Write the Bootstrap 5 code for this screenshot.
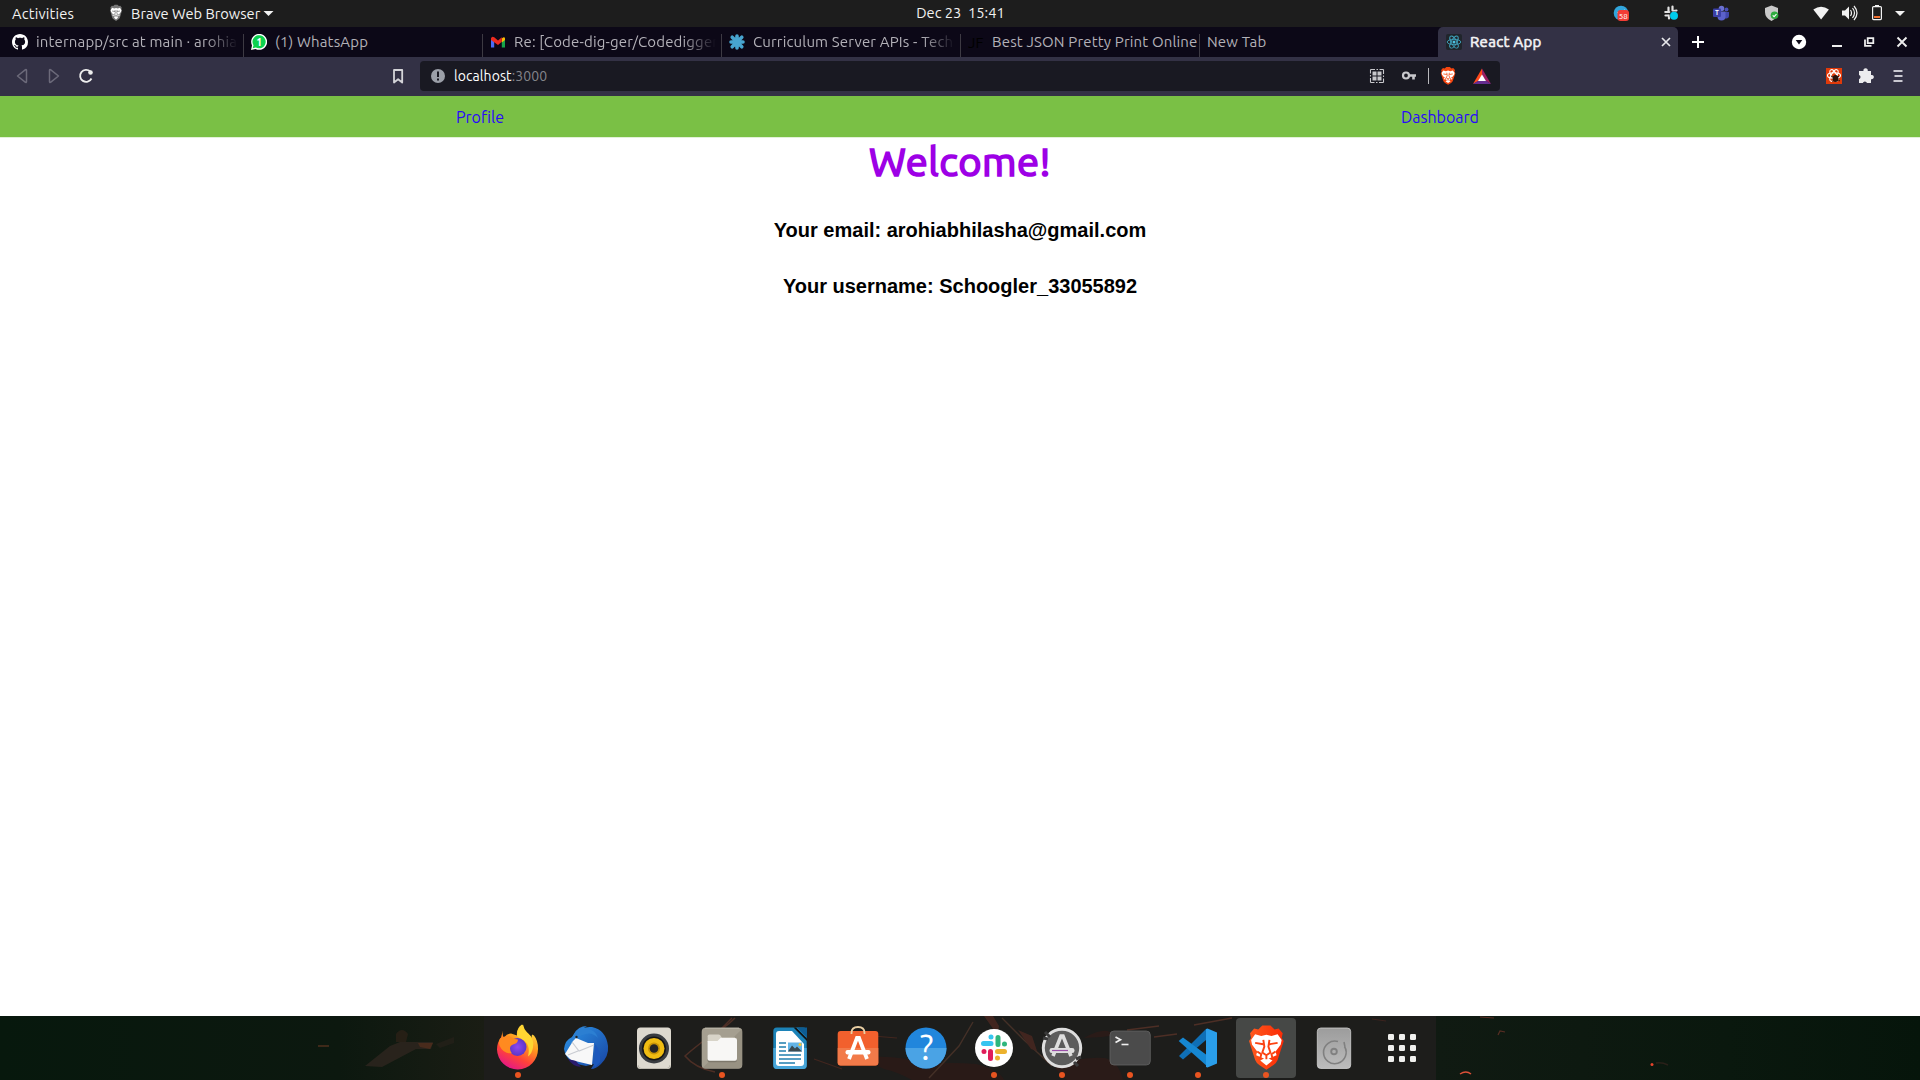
<!DOCTYPE html>
<html lang="en">
<head>
<meta charset="utf-8">
<meta name="viewport" content="width=device-width, initial-scale=1">
<title>React App</title>
<link href="https://cdn.jsdelivr.net/npm/bootstrap@5.3.0/dist/css/bootstrap.min.css" rel="stylesheet">
<style>
body{font-family:"Ubuntu","Noto Sans",sans-serif;width:1920px;height:1080px;overflow:hidden;font-size:15px;line-height:20px;background:#fff}
svg{display:block;flex:none}
svg text{font-family:"Ubuntu","Noto Sans",sans-serif}
.sysbar{height:27px;background:#1d1d1d;color:#f2f2f2;font-size:14.67px;padding:0 10px 1px 12px}
.sys-activities{letter-spacing:.2px;padding-top:2px}
.app-icon{margin-left:32px}
.app-name{margin-left:5px;margin-right:-1px;padding-top:2px}
.clock{left:1px;right:0;top:3px;white-space:pre}
.tabstrip{height:30px;background:#0c0817;color:#b3b1b8;padding-left:4px}
.tab-item{height:30px;width:239px;padding:0 2px 0 8px;gap:8px}
.tab-item.sep{background:linear-gradient(#3d3a43,#3d3a43) 0 7px/1px 23px no-repeat}
.tab-label{overflow:hidden;white-space:nowrap;flex:1;letter-spacing:.16px}
.faded{-webkit-mask-image:linear-gradient(90deg,#000 calc(100% - 36px),transparent calc(100% - 3px));mask-image:linear-gradient(90deg,#000 calc(100% - 36px),transparent calc(100% - 3px))}
.tab-item.current{background:#333145;color:#f3f3f5;width:240px;padding-right:3px;border-radius:5px 5px 0 0}
.tab-item.current .tab-label{-webkit-text-stroke:.6px #f3f3f5;letter-spacing:.3px}
.toolbar{height:39px;background:#333145;padding:0 12px 1px;gap:12px}
.bookmark{margin-left:280px}
.address{width:1080px;height:30px;background:#191922;border-radius:4px;color:#fff;font-size:14px;padding:0 8px}
.address-text{margin-left:6px;letter-spacing:.08px}
.port{color:#84848b}
.bar-sep{width:1px;height:16px;background:#b9b9bd;margin:0 9px}
.appnav{height:42px;background:#7ac045;border-bottom:1px solid #e2f1d7;font-size:16px;line-height:24px;padding-top:9px}
.appnav a{color:#2808fa;text-decoration:none}
.page{height:878px}
.page h1{font-size:40px;font-weight:400;-webkit-text-stroke:1.7px #9d00e6;letter-spacing:.45px;color:#9d00e6;line-height:48px;margin-bottom:33px}
.page h2{font:bold 20px/23px "Liberation Sans",Arial,sans-serif;color:#000;margin-bottom:33px}
.dockbar{height:64px;background:#0a180e}
.wallpaper{left:0;top:0}
.dock-item{width:60px;height:60px;margin:2px 4px;border-radius:4px}
.dock-item.focused{background:#464846}
.running::after{content:"";position:absolute;left:27px;top:54px;width:6px;height:6px;border-radius:50%;background:#e95420}
</style>
</head>
<body class="d-flex flex-column">

<svg width="0" height="0" class="position-absolute">
  <defs>
    <g id="lion">
      <path d="M15 1 L23 1 L27 5 L31 4 L35 9 L34 14 L36 17 L30 37 Q29 40 26 42 L19 47 L12 42 Q9 40 8 37 L2 17 L4 14 L3 9 L7 4 L11 5 Z" transform="translate(0,-2)"/>
    </g>
    <g id="lionface">
      <path d="M8 8 L14 10 L19 8.500 L24 10 L30 8 L34 14 L33 19 L28 26 L29 30 L22 33 L19 35 L16 33 L9 30 L10 26 L5 19 L4 14 Z"/>
      <path d="M13 35.500 L19 32 L25 35.500 L19 40.500 Z"/>
    </g>
    <g id="lionlines" fill="none" stroke-width="1.900" stroke-linejoin="round">
      <path d="M8 17 L16 18.500 M30 17 L22 18.500 M16 14 L17 21 L15 27 L19 30 L23 27 L21 21 L22 14 M10 26 L14 29 L13 33 M28 26 L24 29 L25 33 M19 30 V34"/>
    </g>
  </defs>
</svg>

<header class="sysbar d-flex align-items-center position-relative">
  <span class="sys-activities">Activities</span>
  <svg class="app-icon" width="20" height="20" viewBox="107 3 20 20"><g transform="translate(110.300,5) scale(.355,.355)"><use href="#lion" fill="#777"/><use href="#lionface" fill="#fff"/><use href="#lionlines" stroke="#666"/></g></svg>
  <span class="app-name">Brave Web Browser</span>
  <svg width="20" height="20" viewBox="260 3 20 20"><path d="M264.500 11h10l-5 5z" fill="#f2f2f2"/></svg>
  <div class="clock position-absolute text-center">Dec 23  15:41</div>
  <div class="d-flex ms-auto">
    <svg width="20" height="20" viewBox="1612 3 20 20"><circle cx="1621" cy="13" r="7.300" fill="#31a5dc"/><path d="M1617 12.500l8-3-2 7z" fill="#fff"/><rect x="1617.500" y="10" width="11.500" height="11" rx="3" fill="#f23c34"/><text x="1623.300" y="18.800" font-size="8" text-anchor="middle" fill="#fff">58</text></svg>
    <svg style="margin-left:30px" width="20" height="20" viewBox="1662 3 20 20"><g stroke="#e4e4e4" stroke-width="2.200" stroke-linecap="round"><path d="M1668.500 7.500v3.500M1672.500 6.500v4M1665.300 12h4M1673.500 11l3-.5M1665.500 15.500h3M1669 15.500v3"/></g><circle cx="1674" cy="15.800" r="4.400" fill="#1d1d1d"/><circle cx="1674" cy="15.800" r="4" fill="#00cdec"/></svg>
    <svg style="margin-left:29px" width="20" height="20" viewBox="1711 3 20 20"><circle cx="1721.500" cy="8.500" r="2.800" fill="#6a70d0"/><circle cx="1726.500" cy="9.500" r="1.900" fill="#4a50b8"/><path d="M1724.500 12h4.500v4a2.800 2.800 0 0 1-4.500 2z" fill="#4248ad"/><path d="M1717.500 11.500h8v5a4 4 0 0 1-8 0z" fill="#5b61cb"/><rect x="1713" y="8.500" width="8" height="8.500" rx="1" fill="#3b3fa6"/><text x="1717" y="15.200" font-size="6.500" font-weight="700" text-anchor="middle" fill="#fff">T</text></svg>
    <svg style="margin-left:30px" width="20" height="20" viewBox="1761 3 20 20"><path d="M1771.500 5.500l6.500 2.500v4q0 6-6.500 9-6.500-3-6.500-9v-4z" fill="#c9c9c9"/><circle cx="1774.500" cy="15.300" r="3.800" fill="#2fac3f"/><path d="M1772.700 15.300l1.400 1.400 2.400-2.600" fill="none" stroke="#fff" stroke-width="1.100"/></svg>
    <svg style="margin-left:30px" width="20" height="20" viewBox="1811 3 20 20"><path d="M1813.300 9.500q7.800-5.500 15.600 0l-7.800 10z" fill="#f2f2f2"/></svg>
    <svg style="margin-left:9px" width="20" height="20" viewBox="1840 3 20 20"><path d="M1842 10.500h3l4-4v13l-4-4h-3z" fill="#f2f2f2"/><path d="M1850.500 10q2 3 0 6M1852.500 8q4 5 0 10M1854 6q6 7 0 14" fill="none" stroke="#f2f2f2" stroke-width="1.200"/></svg>
    <svg style="margin-left:7px" width="20" height="20" viewBox="1867 3 20 20"><rect x="1872.600" y="6.600" width="8.800" height="13" rx="1" fill="none" stroke="#f2f2f2" stroke-width="1.200"/><path d="M1875 5h4v1.500h-4z" fill="#f2f2f2"/><path d="M1874 16h6v2h-6z" fill="#f0702f"/></svg>
    <svg style="margin-left:3px" width="20" height="20" viewBox="1890 3 20 20"><path d="M1895 11h10l-5 5z" fill="#f2f2f2"/></svg>
  </div>
</header>

<nav class="tabstrip d-flex" aria-label="Tabs">
  <div class="tab-item d-flex align-items-center">
    <svg width="16" height="16" viewBox="0 0 16 16"><path fill="#fff" d="M8 0C3.580 0 0 3.580 0 8c0 3.540 2.290 6.530 5.470 7.590.4.070.55-.17.55-.38 0-.19-.01-.82-.01-1.490-2.010.37-2.530-.49-2.690-.94-.09-.23-.48-.94-.82-1.130-.28-.15-.68-.52-.01-.53.63-.01 1.080.58 1.230.82.72 1.210 1.870.87 2.330.66.070-.52.28-.87.51-1.070-1.780-.2-3.640-.89-3.640-3.950 0-.87.31-1.590.82-2.150-.08-.2-.36-1.020.08-2.120 0 0 .67-.21 2.200.82.64-.18 1.320-.27 2-.27s1.360.09 2 .27c1.530-1.040 2.200-.82 2.200-.82.44 1.100.16 1.920.08 2.120.51.56.82 1.270.82 2.150 0 3.070-1.870 3.750-3.650 3.950.29.25.54.73.54 1.480 0 1.070-.01 1.930-.01 2.200 0 .21.15.46.55.38A8.010 8.010 0 0 0 16 8c0-4.420-3.580-8-8-8z"/></svg>
    <span class="tab-label faded">internapp/src at main · arohia</span>
  </div>
  <div class="tab-item sep d-flex align-items-center">
    <svg width="16" height="16" viewBox="0 0 16 16"><path d="M0 16l1-4.500A8 8 0 1 1 4.500 15z" fill="#fff"/><path d="M1.700 14.300l.8-3A6.600 6.600 0 1 1 4.800 13.500z" fill="#0cd14e"/><text x="8.200" y="12" font-size="10.500" font-weight="700" text-anchor="middle" fill="#fff">1</text></svg>
    <span class="tab-label">(1) WhatsApp</span>
  </div>
  <div class="tab-item sep d-flex align-items-center">
    <svg width="16" height="16" viewBox="0 0 16 16"><path d="M1 4v9.500h3.200V6z" fill="#4a6cf7"/><path d="M15 4v9.500h-3.200V6z" fill="#16a54a"/><path d="M15 6l-3.200 2.500V4.500q2.800-2.500 3.200 0z" fill="#fbbc04"/><path d="M1 4.500q.6-2.600 3.200-1.200L8 6.500l3.800-3.200v4.500L8 11 1 6z" fill="#ee2b1f"/></svg>
    <span class="tab-label faded">Re: [Code-dig-ger/Codedigger</span>
  </div>
  <div class="tab-item sep d-flex align-items-center">
    <svg width="16" height="16" viewBox="0 0 16 16"><g stroke="#47a5d0" stroke-width="3.600" stroke-linecap="round"><path d="M8 2v12M2 8h12M3.200 3.200l9.600 9.600M12.800 3.200l-9.600 9.600"/></g></svg>
    <span class="tab-label faded">Curriculum Server APIs - Techn</span>
  </div>
  <div class="tab-item sep d-flex align-items-center">
    <svg width="16" height="16" viewBox="0 0 16 16"><text x="0" y="14" font-size="15" fill="#000">JF</text></svg>
    <span class="tab-label">Best JSON Pretty Print Online</span>
  </div>
  <div class="tab-item sep d-flex align-items-center">
    <span class="tab-label">New Tab</span>
  </div>
  <div class="tab-item current d-flex align-items-center">
    <svg width="16" height="16" viewBox="0 0 16 16"><rect width="16" height="16" rx="2" fill="#20252b"/><g fill="none" stroke="#3fa3bd" stroke-width=".9"><ellipse cx="8" cy="8" rx="6.800" ry="2.700"/><ellipse cx="8" cy="8" rx="6.800" ry="2.700" transform="rotate(60 8 8)"/><ellipse cx="8" cy="8" rx="6.800" ry="2.700" transform="rotate(120 8 8)"/></g><circle cx="8" cy="8" r="1.500" fill="#4cc3e0"/></svg>
    <span class="tab-label">React App</span>
    <svg width="18" height="18" viewBox="0 0 18 18"><path d="M5 5l8 8M13 5l-8 8" stroke="#e8e8ec" stroke-width="1.700"/></svg>
  </div>
  <div class="d-flex align-items-center flex-fill" style="padding:0 8px 0 10px">
    <svg width="20" height="20" viewBox="0 0 20 20"><path d="M4 10h12M10 4v12" stroke="#fff" stroke-width="2"/></svg>
    <svg class="ms-auto" width="20" height="20" viewBox="0 0 20 20"><circle cx="10" cy="10" r="7.200" fill="#fff"/><path d="M6.700 8h6.600L10 12.600z" fill="#0c0817"/></svg>
    <svg style="margin-left:18px" width="20" height="20" viewBox="0 0 20 20"><path d="M5 14h10" stroke="#eee" stroke-width="2"/></svg>
    <svg style="margin-left:12px" width="20" height="20" viewBox="0 0 20 20"><path d="M8.700 6.200h5.600v4.900H8.700zM6 7.500v6.300h6.500" fill="none" stroke="#eee" stroke-width="1.800"/></svg>
    <svg style="margin-left:13px" width="20" height="20" viewBox="0 0 20 20"><path d="M5.500 5.500l9 9M14.500 5.500l-9 9" stroke="#eee" stroke-width="1.900"/></svg>
  </div>
</nav>

<div class="toolbar d-flex align-items-center">
  <svg width="20" height="20" viewBox="12 66 20 20"><path d="M17.500 76l8-6.300q1 -.4 1 .8v11q0 1.200-1 .8z" fill="none" stroke="#6c6a7a" stroke-width="1.500" stroke-linejoin="round"/></svg>
  <svg width="20" height="20" viewBox="44 66 20 20"><path d="M58.500 76l-8-6.300q-1-.4-1 .8v11q0 1.200 1 .8z" fill="none" stroke="#6c6a7a" stroke-width="1.500" stroke-linejoin="round"/></svg>
  <svg width="20" height="20" viewBox="76 66 20 20"><path d="M91.500 78.500a6 6 0 1 1-1.200-7" fill="none" stroke="#eee" stroke-width="1.800"/><circle cx="90.500" cy="72.500" r="2.300" fill="#eee"/></svg>
  <svg class="bookmark" width="20" height="20" viewBox="388 66 20 20"><path d="M394 70h8.200v12.500l-4.100-3.200-4.100 3.200z" fill="none" stroke="#d4d4d8" stroke-width="1.800" stroke-linejoin="round"/></svg>
  <div class="address d-flex align-items-center">
    <svg width="20" height="20" viewBox="428 66 20 20"><circle cx="438" cy="76" r="7" fill="#9b9fa8"/><path d="M438 71.500v5.500M438 78.500v2" stroke="#191922" stroke-width="2"/></svg>
    <span class="address-text">localhost<span class="port">:3000</span></span>
    <svg class="ms-auto" width="20" height="20" viewBox="1367 66 20 20"><rect x="1370.500" y="69.500" width="13" height="13" fill="none" stroke="#c8c8cc" stroke-width="1.100" stroke-dasharray="4.500 1.500 1.500 1.500 4 0"/><path d="M1372.500 71.500h4v4h-4zM1377.500 71.500h4v4h-4zM1372.500 76.500h4v4h-4zM1377.500 76.500h4v4h-4z" fill="#c8c8cc"/></svg>
    <svg style="margin-left:12px" width="20" height="20" viewBox="1399 66 20 20"><circle cx="1406" cy="75.500" r="3" fill="none" stroke="#c8c8cc" stroke-width="2.200"/><path d="M1409 75.500h7M1413.500 76v3.500" fill="none" stroke="#c8c8cc" stroke-width="2.600"/></svg>
    <div class="bar-sep"></div>
    <svg width="20" height="20" viewBox="1438 66 20 20"><g transform="translate(1439.900,67.300) scale(.43,.39)"><use href="#lion" fill="#f4450f"/><use href="#lionface" fill="#fff"/><use href="#lionlines" stroke="#f4450f"/></g></svg>
    <svg style="margin-left:14px" width="20" height="20" viewBox="1472 66 20 20"><path d="M1482 68.500v7l-3.500 5.500-5.500 3z" fill="#ff4a1c"/><path d="M1482 68.500v7l4 5.500 5 3z" fill="#9e1f63"/><path d="M1473 84h18l-5.500-3.500h-7z" fill="#662d91"/><path d="M1482 74.500l4 6.500h-8z" fill="#fff"/></svg>
  </div>
  <svg class="ms-auto" width="20" height="20" viewBox="1824 66 20 20"><rect x="1826" y="68" width="16" height="16" fill="#e03a0a"/><g fill="none" stroke="#fff" stroke-width="1.100"><ellipse cx="1834" cy="75.500" rx="6.500" ry="2.700"/><ellipse cx="1834" cy="75.500" rx="6.500" ry="2.700" transform="rotate(60 1834 75.500)"/><ellipse cx="1834" cy="75.500" rx="6.500" ry="2.700" transform="rotate(120 1834 75.500)"/></g><ellipse cx="1835.500" cy="78.500" rx="3" ry="3.600" fill="#2b120a"/><path d="M1831 76l9 5M1832 81.500l7-5.500" stroke="#2b120a"/></svg>
  <svg width="20" height="20" viewBox="1856 66 20 20"><path d="M1860 71h3.500a2.200 2.200 0 1 1 4.200 0h3.300v4a2.200 2.200 0 1 1 0 4.200V83h-4a2.200 2.200 0 0 0-4.200 0H1859v-3.800a2.200 2.200 0 0 0 0-4.200V71z" fill="#ececee"/></svg>
  <svg width="20" height="20" viewBox="1888 66 20 20"><path d="M1893.500 71h9M1894.500 76h8M1893.500 81h9" stroke="#c9c8d0" stroke-width="1.900"/></svg>
</div>

<nav class="appnav" aria-label="App">
  <div class="row g-0 text-center">
    <div class="col-6"><a href="#">Profile</a></div>
    <div class="col-6"><a href="#">Dashboard</a></div>
  </div>
</nav>

<main class="page text-center">
  <h1>Welcome!</h1>
  <h2>Your email: arohiabhilasha@gmail.com</h2>
  <h2>Your username: Schoogler_33055892</h2>
</main>

<footer class="dockbar position-relative">
  <svg class="wallpaper position-absolute" width="1920" height="64" viewBox="0 1016 1920 64">
    <defs>
      <linearGradient id="wl"><stop offset="0" stop-color="#07180d"/><stop offset=".7" stop-color="#0c180f"/><stop offset="1" stop-color="#1a1d14"/></linearGradient>
      <linearGradient id="wr"><stop offset="0" stop-color="#101a12"/><stop offset=".6" stop-color="#0a180e"/><stop offset="1" stop-color="#06150b"/></linearGradient>
    </defs>
    <rect y="1016" width="484" height="64" fill="url(#wl)"/>
    <rect x="484" y="1016" width="952" height="64" fill="#1d1d1b"/>
    <rect x="1436" y="1016" width="484" height="64" fill="url(#wr)"/>
    <g opacity=".8">
    <path d="M365 1066l25-20 10-4 33 0-2 7-15 0-34 18z" fill="#2f261f"/><path d="M396 1034q6-8 12 0l-2 8-10 0z" fill="#2b2117"/><path d="M418 1043l15 0-3 6-10-2z" fill="#56301f"/><path d="M318 1046h11" stroke="#8a4428" stroke-width="1"/><path d="M436 1044l18-7v6l-14 5z" fill="#242019"/>
    <path d="M735 1018q-12 12-25 18-16 12-25 20 10 12 30 16M732 1018l-22 22" fill="none" stroke="#5a3328" stroke-width="1.500"/>
    <path d="M873 1036l24 2M814 1059l28 10" stroke="#4b281f" stroke-width="1.200"/>
    <path d="M860 1058q38-4 62 6 30-2 54 0 24 6 28 16h-92q-14-8-28-11z" fill="#2d1a17"/>
    <path d="M973 1022l-14 24-30 32M1002 1018l22 22 28 26" fill="none" stroke="#4e352a" stroke-width="1.400"/>
    <path d="M984 1016l10 14 2 14 3-18-6-10zM1018 1030l14 6 5 15-6-2z" fill="#4b2820"/>
    <path d="M1055 1068q22-12 50-10 14 4 18 22h-56zM1084 1038q18-10 26-6l12 2-20 3z" fill="#2e1b18"/>
    <path d="M1127 1030l32-4M1154 1037l23-3M1194 1025l38-7M1120 1043q-8-2-8 6" fill="none" stroke="#593328" stroke-width="1.500"/>
    <path d="M1372 1019l14 2" stroke="#44251f"/>
    <path d="M1480 1017l14 1M1498 1035l2-4 5 1" fill="none" stroke="#6a3328" stroke-width="1.200"/>
    </g>
    <path d="M1460 1074q6-4 11 0" fill="none" stroke="#dc5038" stroke-width="1.500"/><circle cx="1652" cy="1064.500" r="1.500" fill="#e5432b"/><path d="M1656 1063q6-1 12 2" fill="none" stroke="#2a2019" stroke-width="1.500"/>
  </svg>
  <div class="d-flex justify-content-center position-relative">
    <div class="dock-item running position-relative"><svg width="60" height="60">
      <defs><linearGradient id="ff" x1=".8" y1="0" x2=".3" y2="1"><stop offset="0" stop-color="#fff04a"/><stop offset=".4" stop-color="#ff9a1e"/><stop offset=".7" stop-color="#ff4338"/><stop offset="1" stop-color="#e3158c"/></linearGradient><radialGradient id="fp"><stop offset="0" stop-color="#8f48ef"/><stop offset="1" stop-color="#5a36c8"/></radialGradient></defs>
      <g transform="translate(-1,-.5)"><path d="M16 13q-1 6 1 7 3-4 7-4l6 2q-1-7 5-11 1 5 4 7 5 4 5 8l1-5 2 1q4 5 4 13A20.500 20.500 0 0 1 10 32q0-7 4-12z" fill="url(#ff)"/><path d="M36 7q1 5 4 8 8 6 6 15-1 6-5 9 3-13-6-17-6-3-5-5 1-7 6-10z" fill="#ffd632"/><circle cx="30.500" cy="29.500" r="9" fill="url(#fp)"/><path d="M13 21q7-4 12-1 3 2 6 2 0 4-5 5-3 1-3 4 0 3 2 5-9 0-12-7-2-4 0-8z" fill="#ff8a20"/></g>
    </svg></div>
    <div class="dock-item"><svg width="60" height="60">
      <defs><linearGradient id="tb" x1="0" y1="0" x2="1" y2="1"><stop offset="0" stop-color="#2d95e8"/><stop offset="1" stop-color="#1742a0"/></linearGradient></defs>
      <path d="M16 19Q22 8 36 9q14 3 16 19 1 10-7 18-5 5-10 5l3-5-8 2-13-3Q9 39 8 31q1-9 8-12z" fill="url(#tb)"/><path d="M18 16q4-8 13-8-4 2-4 4 11-3 15 8-6-6-12-4-8 1-13 8-2 0-1-4z" fill="#2c7fd2"/><path d="M17 23l3-3 12 5 6 0-2 22-21-5-6-6z" fill="#f8f8f8"/><path d="M16 24l7 9 15-6M22 33l-10 4" fill="none" stroke="#c9ccd2" stroke-width="1.200"/><path d="M12 41q4 7 13 8l-5-6z" fill="#2a1b6c"/><path d="M39 26q6 6 5 18l-5 5q-3-5 0-9z" fill="#1c58bd"/><circle cx="20.500" cy="19" r="1.200" fill="#222"/>
    </svg></div>
    <div class="dock-item"><svg width="60" height="60"><rect x="13" y="9.500" width="34" height="41.500" rx="3.500" fill="#ddd9cf"/><path d="M14 47q0 3 3 3.500h26q3-.5 3-3.500" fill="none" stroke="#bcb8ae"/><circle cx="30" cy="30.500" r="15" fill="#393c40"/><circle cx="30" cy="30.500" r="12" fill="#151515"/><circle cx="30" cy="30.500" r="10.500" fill="#f0bc12"/><circle cx="30" cy="30.500" r="6" fill="#c89407"/><circle cx="30" cy="30.500" r="4.300" fill="#252525"/></svg></div>
    <div class="dock-item running position-relative"><svg width="60" height="60"><rect x="9.700" y="9.700" width="40.600" height="41" rx="4" fill="#a59f90"/><path d="M13 10.200h34" stroke="#bdb8ab"/><path d="M10.500 50L50 11v36q0 3-3 3H14z" fill="#989283"/><path d="M16.500 17h10l3 3h13.500q2 0 2 2v19q0 2.300-2 2.300H17.500q-2 0-2-2V18z" fill="#7d786b" transform="translate(0,1)"/><path d="M15.500 18.500q0-2 2-2h9q2 0 2.500 2l1 1h13v4h-27.500z" fill="#d8d4c8"/><path d="M15.500 23h10l3-3h14.500q2 0 2 2v18.500q0 2.300-2 2.300H17.500q-2 0-2-2z" fill="#f8f7f5"/></svg></div>
    <div class="dock-item"><svg width="60" height="60"><rect x="13.300" y="9.500" width="33.400" height="41.500" rx="3.500" fill="#1c83b8"/><path d="M13.300 30h33.400v17q0 4-3.500 4H17q-3.700 0-3.700-4z" fill="#48a6d9"/><path d="M37 9.500h10v10z" fill="#0d5c93"/><path d="M33.500 9.500L47 23v-2.500L36 9.500z" fill="#111"/><path d="M19 13h13l12 13v19q0 3-3 3H19q-3 0-3-3V16q0-3 3-3z" fill="#fff"/><path d="M19 25h7M19 29h7M19 33h7M19 37h22M19 41h22M19 45h16" stroke="#207fae" stroke-width="1.700"/><rect x="28" y="24.500" width="14" height="9" fill="#63b4e6"/><path d="M28 33.500l4-6 3 3 2-2 5 5z" fill="#3b4a50"/><circle cx="40" cy="26.500" r="1.500" fill="#f4c430"/></svg></div>
    <div class="dock-item"><svg width="60" height="60"><rect x="9.700" y="13" width="40.600" height="34.500" rx="3" fill="#f2602d"/><path d="M9.700 30h40.600v14.500q0 3-3 3H12.700q-3 0-3-3z" fill="#f27a49"/><path d="M23.500 16v-1q0-6 6.500-6t6.500 6v1" fill="none" stroke="#e9cfa4" stroke-width="1.800"/><path d="M21 41l8-21h2l8 21" fill="none" stroke="#fff" stroke-width="3.800"/><rect x="17.500" y="32" width="25" height="4.500" rx="2" fill="#fff"/></svg></div>
    <div class="dock-item"><svg width="60" height="60"><circle cx="30" cy="30" r="20.500" fill="#2186dc"/><path d="M9.500 30h41a20.500 20.500 0 0 1-41 0z" fill="#4aa3e5"/><text x="30.500" y="42.300" text-anchor="middle" font-size="35" fill="#fff">?</text></svg></div>
    <div class="dock-item running position-relative"><svg width="60" height="60"><circle cx="30" cy="30" r="19" fill="#fff"/><g stroke-width="5" stroke-linecap="round"><path d="M27 19v0M19.500 25.500h7.500" stroke="#36c5f0"/><path d="M34 19.500v7M40.500 26v0" stroke="#2eb67d"/><path d="M33.500 33.500h7M33.500 40v0" stroke="#ecb22e"/><path d="M26.500 33.500v7M20 33.500v0" stroke="#e01e5a"/></g></svg></div>
    <div class="dock-item running position-relative"><svg width="60" height="60"><circle cx="30" cy="30" r="18.700" fill="#5c5c5c" stroke="#dedede" stroke-width="3"/><path d="M13 14l5 5M11 20l5 1M42 44l4 4M44 41l5-2" stroke="#3a3a3a" stroke-width="3"/><path d="M21 38l8-20h2l8 20" fill="none" stroke="#dedede" stroke-width="3.600"/><rect x="17.500" y="30" width="25" height="5" rx="2.300" fill="#dedede"/><path d="M20 32.500h16" stroke="#9a4fa8" stroke-width="1.200"/></svg></div>
    <div class="dock-item running position-relative"><svg width="60" height="60"><rect x="10" y="13" width="40.300" height="34" rx="4" fill="#4b4b4b" stroke="#626262" stroke-width=".8"/><path d="M15.500 19l5 2.800-5 2.800" fill="none" stroke="#f0f0f0" stroke-width="1.700"/><path d="M21.500 26.500h7" stroke="#f0f0f0" stroke-width="1.600"/></svg></div>
    <div class="dock-item running position-relative"><svg width="60" height="60"><path d="M11 38l27-27v11L15 41.500z" fill="#0f6fb6"/><path d="M10.700 23l4.300-3.500L40 38v11z" fill="#1687d2"/><path d="M38 11l1.500-.5 9.500 4v31L39.500 49.500 38 49z" fill="#2a9eea"/></svg></div>
    <div class="dock-item focused running position-relative"><svg width="60" height="60"><defs><linearGradient id="br"><stop offset="0" stop-color="#ff5a1e"/><stop offset="1" stop-color="#fb2a05"/></linearGradient></defs><g transform="translate(11,8.500) scale(1.020,.96)"><use href="#lion" fill="url(#br)"/><use href="#lionface" fill="#fff"/><use href="#lionlines" stroke="#fb4312"/></g></svg></div>
    <div class="dock-item"><svg width="60" height="60"><defs><linearGradient id="dk" x2="0" y2="1"><stop offset="0" stop-color="#9c9c9c"/><stop offset="1" stop-color="#bcbcbc"/></linearGradient></defs><rect x="13.300" y="10" width="33.400" height="40.500" rx="3.500" fill="url(#dk)" stroke="#cfcfcf" stroke-width=".8"/><path d="M40.500 28.500A11.300 11.300 0 1 1 34 23.500M40 24l1 5" fill="none" stroke="#808080" stroke-width="1.600"/><circle cx="30" cy="33.500" r="2.800" fill="none" stroke="#808080" stroke-width="1.900"/></svg></div>
    <div class="dock-item"><svg width="60" height="60"><g fill="#f0f0ee"><rect x="16" y="16" width="6" height="6" rx="1.300"/><rect x="27" y="16" width="6" height="6" rx="1.300"/><rect x="38" y="16" width="6" height="6" rx="1.300"/><rect x="16" y="27" width="6" height="6" rx="1.300"/><rect x="27" y="27" width="6" height="6" rx="1.300"/><rect x="38" y="27" width="6" height="6" rx="1.300"/><rect x="16" y="38" width="6" height="6" rx="1.300"/><rect x="27" y="38" width="6" height="6" rx="1.300"/><rect x="38" y="38" width="6" height="6" rx="1.300"/></g></svg></div>
  </div>
</footer>
<script src="https://cdn.jsdelivr.net/npm/bootstrap@5.3.0/dist/js/bootstrap.bundle.min.js"></script>
</body>
</html>
